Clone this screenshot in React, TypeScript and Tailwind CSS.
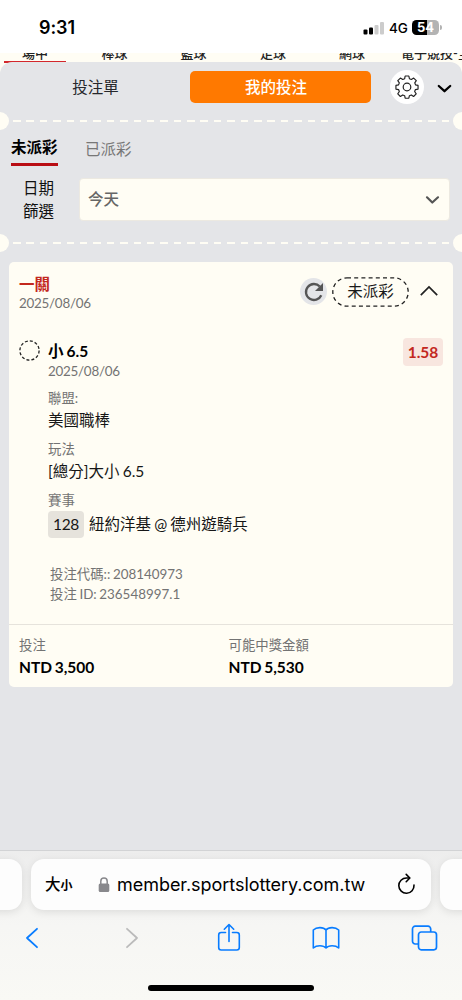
import { Fragment } from "react";

const sports = [
    { name: "場中", width: "w-[62px] mx-1 border-b-2 border-[#d3272c]" },
    { name: "棒球", width: "w-[89px]" },
    { name: "籃球", width: "w-[69px]" },
    { name: "足球", width: "w-[90px]" },
    { name: "網球", width: "w-[68px]" },
];

const details = [
    { label: "聯盟:", value: "美國職棒" },
    { label: "玩法", value: "[總分]大小 6.5" },
];

const StatusBar = () => (
    <div className="flex h-[53px] shrink-0 items-start justify-between bg-white pl-[39px] pr-[20px] pt-[15px] text-black">
        <span className="font-['Inter',sans-serif] text-[18px] font-semibold leading-[26px] tracking-[-0.1px]">9:31</span>
        <div className="flex h-[25px] items-center">
            <svg width="22" height="14" viewBox="0 0 22 14" className="mr-[4px]">
                <rect x="0.5" y="8.5" width="4" height="5" rx="1.1" fill="#000" />
                <rect x="6" y="6.5" width="4" height="7" rx="1.1" fill="#000" />
                <rect x="11.5" y="4" width="4" height="9.5" rx="1.1" fill="#ccc" />
                <rect x="17" y="1" width="4" height="12.5" rx="1.1" fill="#ccc" />
            </svg>
            <span className="w-[23px] pt-px font-['Inter',sans-serif] text-[13.5px] font-medium leading-[25px] tracking-[-0.2px]">4G</span>
            <div className="flex h-[15px] w-[27px] items-center justify-center rounded-[4.5px] bg-[linear-gradient(90deg,#000_54%,#b3b3b3_54%)] font-['Inter',sans-serif] text-[13px] font-bold leading-[15px] text-white">
                54
            </div>
            <div className="ml-px h-[5px] w-[2px] rounded-r-full bg-[#b3b3b3]" />
        </div>
    </div>
);

// Perforated ticket edge: a notch on each side and dashes between them
const Perforation = () => (
    <div className="-mx-[9px] flex h-[18px] items-center justify-between">
        <span className="size-[18px] rounded-full bg-[#fffdf4]" />
        <div className="flex w-[436px] items-center justify-between">
            {Array.from({ length: 33 }, (_, i) => (
                <span key={i} className="h-[2.5px] w-[7.5px] bg-[#fffdf4]" />
            ))}
        </div>
        <span className="size-[18px] rounded-full bg-[#fffdf4]" />
    </div>
);

const Gear = () => (
    <svg width="24" height="24" viewBox="0 0 24 24" fill="none" stroke="#222" strokeWidth="1.2" strokeLinejoin="round">
        <path d="M10.1 1.4h3.8l.6 2.8 2 .8 2.4-1.5 2.7 2.7-1.6 2.3.8 2 2.6.6v3.8l-2.7.5-.8 2 1.6 2.4-2.7 2.7-2.3-1.6-2 .8-.6 2.6h-3.8l-.5-2.6-2-.8-2.4 1.6-2.7-2.7 1.6-2.4-.8-2-2.7-.5v-3.8l2.7-.6.8-2-1.6-2.3 2.7-2.7L7.6 5l2-.8z" transform="translate(.35 -.35) scale(.97)" />
        <circle cx="12" cy="12" r="3.8" />
    </svg>
);

const BetHeader = () => (
    <div className="flex h-[50px] items-center">
        <span className="w-[191px] pt-px text-center text-[15.5px] text-[#26272b]">投注單</span>
        <div className="-ml-px flex h-8 w-[181px] items-center justify-center rounded-[5px] bg-[#ff7900] pr-[9px] pt-px text-[15.5px] font-medium text-white">
            我的投注
        </div>
        <div className="ml-[19px] flex size-[34px] items-center justify-center rounded-full bg-white">
            <Gear />
        </div>
        <svg width="15" height="10" viewBox="0 0 15 10" className="ml-[13px] mt-[3px]" fill="none" stroke="#000" strokeWidth="2.3" strokeLinecap="round" strokeLinejoin="round">
            <path d="M1.8 2 7.5 7.2 13.200 2" />
        </svg>
    </div>
);

const Filters = () => (
    <>
        <div className="flex h-[37px] items-start gap-[27px] pl-[11px] pt-[5px] text-[15.5px] leading-6">
            <div className="h-[31px] w-[47px] border-b-[3px] border-[#b90d14] font-bold text-black">未派彩</div>
            <div className="pt-[2px] text-[#777]">已派彩</div>
        </div>
        <div className="mb-[13px] mt-[11px] flex h-[43px] items-center">
            <div className="mr-[25px] w-[54px] text-right text-[15.5px] leading-[22.5px] text-[#111]">
                日期<br />篩選
            </div>
            <div className="flex h-[43px] w-[371px] items-center justify-between rounded-[4px] border border-[#ece9e1] bg-[#fffdf4] px-[9px]">
                <span className="-ml-px pt-px text-[15.5px] font-medium text-[#666]">今天</span>
                <svg width="15" height="10" viewBox="0 0 15 10" className="mt-px" fill="none" stroke="#555" strokeWidth="2.2" strokeLinecap="round" strokeLinejoin="round">
                    <path d="M2 2.3 7.3 7.5 13 2.3" />
                </svg>
            </div>
        </div>
    </>
);

const BetCard = () => (
    <div className="mx-[9px] mt-[10px] flex h-[424.5px] flex-col rounded-[5px] bg-[#fffdf4] [word-spacing:-0.8px]">
        <div className="flex h-[75px] items-start justify-between pl-[10px] pr-[14px] pt-[12px]">
            <div>
                <div className="text-[15.5px] font-bold leading-5 text-[#c3281e]">一關</div>
                <div className="text-[13.4px] leading-[19px] tracking-[-0.25px] text-[#737373]">2025/08/06</div>
            </div>
            <div className="flex items-center pt-[3px]">
                <span className="-mt-px flex size-[27px] items-center justify-center rounded-full bg-[#e4e5e8]">
                    <svg width="20" height="20" viewBox="0 0 20 20">
                        <path d="M17.3 13.2A8 8 0 1 1 15.8 4.5" fill="none" stroke="#555" strokeWidth="2.3" />
                        <path d="M19 1v8h-8z" fill="#555" />
                    </svg>
                </span>
                <span className="relative ml-[5px] flex h-[30px] w-[77px] items-center justify-center text-[15.5px] text-[#1a1a1a]">
                    <svg className="absolute inset-0" width="77" height="30" viewBox="0 0 77 30" fill="none">
                        <rect x="0.8" y="0.8" width="75.4" height="28.4" rx="14.2" stroke="#222" strokeWidth="1.3" strokeDasharray="4 3.2" />
                    </svg>
                    未派彩
                </span>
                <svg width="20" height="12" viewBox="0 0 20 12" className="mb-[2px] ml-[10px]" fill="none" stroke="#222" strokeWidth="1.7">
                    <path d="M1.8 10.2 10 2l8.2 8.2" />
                </svg>
            </div>
        </div>
        <div className="flex h-[287px] items-start px-[10px]">
            <svg width="21" height="21" viewBox="0 0 21 21" className="mr-[8px] mt-[3px]" fill="none">
                <circle cx="10.5" cy="10.5" r="9.6" stroke="#222" strokeWidth="1.3" strokeDasharray="3 2.03" />
            </svg>
            <div className="flex-1 pt-[4px]">
                <div className="text-[15.5px] font-bold leading-5 text-black">小 6.5</div>
                <div className="pt-px text-[13.4px] leading-[19px] tracking-[-0.25px] text-[#737373]">2025/08/06</div>
                {details.map((item) => (
                    <Fragment key={item.label}>
                        <div className="mt-[7px] text-[13.4px] leading-5 text-[#737373]">{item.label}</div>
                        <div className="pt-px text-[15.5px] leading-[23px] text-[#161616]">{item.value}</div>
                    </Fragment>
                ))}
                <div className="mb-px mt-[7px] text-[13.4px] leading-5 text-[#737373]">賽事</div>
                <div className="flex items-center text-[15.5px] text-[#161616]">
                    <span className="mr-[5px] flex h-[27px] w-[36px] items-center justify-center rounded-[4px] bg-[#e6e3dc] pt-px tracking-[-0.3px]">128</span>
                    <span className="pt-px">紐約洋基 @ 德州遊騎兵</span>
                </div>
                <div className="mt-[26px] pl-[2px] text-[13.4px] leading-5 text-[#737373]">
                    <div>投注代碼:: 208140973</div>
                    <div>投注 ID: 236548997.1</div>
                </div>
            </div>
            <span className="mt-[1px] flex h-[28px] w-[40px] items-center justify-center rounded-[4px] bg-[#f8e6df] pt-px text-[15.5px] font-bold text-[#c3281e]">
                1.58
            </span>
        </div>
        <div className="flex flex-1 border-t border-[#e6e3dc] pl-[10px] pt-[10px] text-[15.5px]">
            <div className="w-[209.5px]">
                <div className="text-[13.4px] leading-5 text-[#737373]">投注</div>
                <div className="font-bold leading-6 tracking-[-0.05px] text-black">NTD 3,500</div>
            </div>
            <div>
                <div className="text-[13.4px] leading-5 text-[#737373]">可能中獎金額</div>
                <div className="font-bold leading-6 tracking-[-0.05px] text-black">NTD 5,530</div>
            </div>
        </div>
    </div>
);

const BrowserBar = () => (
    <div className="flex h-[150px] shrink-0 flex-col items-center overflow-hidden border-t border-[#d2d3d5] bg-gradient-to-b from-[#ededed] via-[#f6f6f4] via-50% to-[#f9f9f5]">
        <div className="mt-[8px] flex w-[552px] shrink-0 gap-[9px] font-['Inter','Noto_Sans_CJK_TC',sans-serif] text-black">
            <div className="h-[51px] w-[67px] rounded-[13px] bg-[#fdfdfd] shadow-[0_2px_9px_rgba(0,0,0,0.1)]" />
            <div className="flex h-[51px] w-[400px] items-center rounded-[13px] bg-[#fdfdfd] pl-[14px] pr-[15px] shadow-[0_2px_9px_rgba(0,0,0,0.1)]">
                <span className="flex w-[53px] items-baseline font-medium">
                    <span className="text-[15.5px]">大</span>
                    <span className="text-[12px] font-bold">小</span>
                </span>
                <svg width="12" height="16" viewBox="0 0 12 16" className="mr-[7px]">
                    <path d="M2.8 7V4.3a3.2 3.2 0 0 1 6.4 0V7" fill="none" stroke="#88888c" strokeWidth="1.5" />
                    <rect x="0.7" y="6.5" width="10.6" height="8.5" rx="1.5" fill="#88888c" />
                </svg>
                <span className="whitespace-nowrap text-[18px] tracking-[-0.04px]">member.sportslottery.com.tw</span>
                <svg width="19" height="22" viewBox="0 0 19 22" className="mb-[2px] ml-auto" fill="none" stroke="#000" strokeWidth="1.6" strokeLinecap="round" strokeLinejoin="round">
                    <path d="M17 12.1A7.6 7.6 0 1 1 9.5 5h3" />
                    <path d="M9.2 1.4 12.8 5 9.2 8.7" />
                </svg>
            </div>
            <div className="h-[51px] w-[67px] rounded-[13px] bg-[#fdfdfd] shadow-[0_2px_9px_rgba(0,0,0,0.1)]" />
        </div>
        <div className="mt-[11px] flex h-[32px] w-full shrink-0 items-center pl-[25px] pt-px">
            <svg width="14" height="22" viewBox="0 0 14 22" fill="none" stroke="#087cff" strokeWidth="1.8" strokeLinecap="round" strokeLinejoin="round">
                <path d="M12 1.8 2 11l10 9.2" />
            </svg>
            <svg width="14" height="22" viewBox="0 0 14 22" className="ml-[86px]" fill="none" stroke="#bbbbbb" strokeWidth="1.8" strokeLinecap="round" strokeLinejoin="round">
                <path d="M2 1.8 12 11 2 20.2" />
            </svg>
            <svg width="24" height="29" viewBox="0 0 24 29" className="ml-[78px]" fill="none" stroke="#087cff" strokeWidth="1.6" strokeLinecap="round" strokeLinejoin="round">
                <path d="M8.500 9.500H4.200a2.500 2.500 0 0 0-2.500 2.500v12.500A2.500 2.500 0 0 0 4.200 27h15.600a2.500 2.500 0 0 0 2.500-2.500V12a2.500 2.500 0 0 0-2.500-2.500h-4.300" />
                <path d="M12 18.500V1.700M7.300 6.200 12 1.500l4.700 4.700" />
            </svg>
            <svg width="28" height="24" viewBox="0 0 28 24" className="ml-[71px]" fill="none" stroke="#087cff" strokeWidth="1.6" strokeLinejoin="round">
                <path d="M14 22c-2.5-3-9.5-3-12.7 0V4C4.5.8 11.5.8 14 4c2.5-3.2 9.5-3.2 12.7 0v18c-3.2-3-10.2-3-12.7 0zM14 4v18" />
            </svg>
            <svg width="27" height="26" viewBox="0 0 27 26" className="ml-[71px]" fill="none" stroke="#087cff" strokeWidth="1.7">
                <path d="M7.5 19H4.2a2.7 2.7 0 0 1-2.7-2.7V3.9a2.7 2.7 0 0 1 2.7-2.7H17a2.7 2.7 0 0 1 2.7 2.7v3" />
                <rect x="7.5" y="7" width="18" height="17.8" rx="2.7" />
            </svg>
        </div>
        <div className="mt-[32px] h-[6px] w-[166px] shrink-0 rounded-full bg-black" />
    </div>
);

const App = () => (
    <div className="flex h-[1000px] w-[462px] flex-col overflow-hidden bg-[#fffdf4] font-['Lato','Noto_Sans_CJK_TC',sans-serif]">
        <StatusBar />
        {/* Sport tabs, scrolled partly under the status bar */}
        <div className="flex h-[10px] shrink-0 items-end overflow-hidden whitespace-nowrap text-[13px] font-medium leading-[23px] text-[#222]">
            {sports.map((sport) => (
                <div key={sport.name} className={`h-[21px] shrink-0 text-center ${sport.width}`}>
                    {sport.name}
                </div>
            ))}
            <div className="h-[21px] pl-[15px]">電子競技-全部</div>
        </div>
        <main className="-mt-px min-h-0 flex-1 rounded-t-[12px] bg-[#e4e5e8]">
            <BetHeader />
            <Perforation />
            <Filters />
            <Perforation />
            <BetCard />
        </main>
        <BrowserBar />
    </div>
);

export default App;
